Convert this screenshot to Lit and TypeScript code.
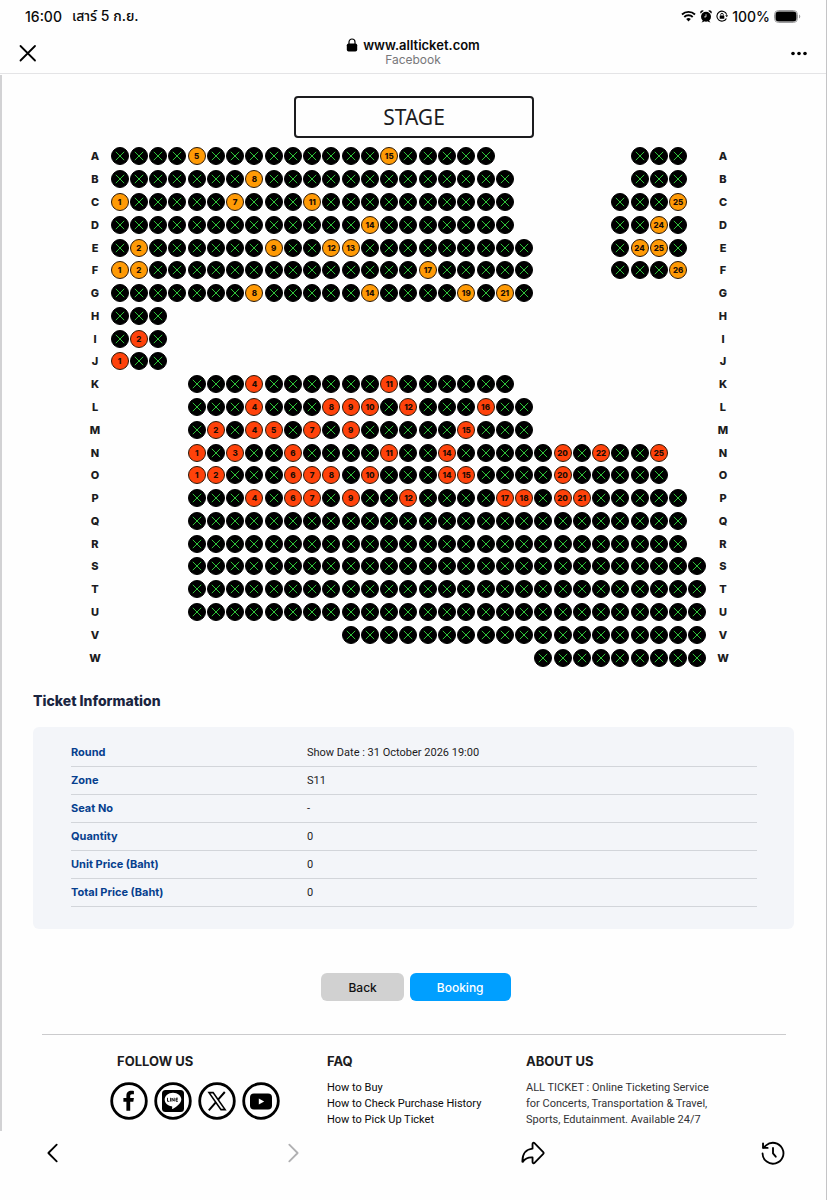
import { LitElement, html, svg, css, nothing } from "lit";
import { customElement, property, state } from "lit/decorators.js";
import { classMap } from "lit/directives/class-map.js";

type Tier = "amber" | "red";

interface SeatRow {
  name: string;
  /** Grid column spans (inclusive) that hold seats. */
  blocks: [number, number][];
  open: number[];
  tier: Tier;
}

const row = (
  name: string,
  blocks: [number, number][],
  open: number[] = [],
  tier: Tier = "red"
): SeatRow => ({ name, blocks, open, tier });

const ROWS: SeatRow[] = [
  row("A", [[1, 20], [28, 30]], [5, 15], "amber"),
  row("B", [[1, 21], [28, 30]], [8], "amber"),
  row("C", [[1, 21], [27, 30]], [1, 7, 11, 25], "amber"),
  row("D", [[1, 21], [27, 30]], [14, 24], "amber"),
  row("E", [[1, 22], [27, 30]], [2, 9, 12, 13, 24, 25], "amber"),
  row("F", [[1, 22], [27, 30]], [1, 2, 17, 26], "amber"),
  row("G", [[1, 22]], [8, 14, 19, 21], "amber"),
  row("H", [[1, 3]]),
  row("I", [[1, 3]], [2]),
  row("J", [[1, 3]], [1]),
  row("K", [[5, 21]], [4, 11]),
  row("L", [[5, 22]], [4, 8, 9, 10, 12, 16]),
  row("M", [[5, 22]], [2, 4, 5, 7, 9, 15]),
  row("N", [[5, 29]], [1, 3, 6, 11, 14, 20, 22, 25]),
  row("O", [[5, 29]], [1, 2, 6, 7, 8, 10, 14, 15, 20]),
  row("P", [[5, 30]], [4, 6, 7, 9, 12, 17, 18, 20, 21]),
  row("Q", [[5, 30]]),
  row("R", [[5, 30]]),
  row("S", [[5, 31]]),
  row("T", [[5, 31]]),
  row("U", [[5, 31]]),
  row("V", [[13, 31]]),
  row("W", [[23, 31]]),
];

const COLUMNS = 31;

@customElement("seat-row")
class SeatRowElement extends LitElement {
  @property({ attribute: false }) row!: SeatRow;
  @state() private picked = new Set<number>();

  static styles = css`
    :host {
      display: grid;
      grid-template-columns: 30px repeat(31, minmax(0, 1fr)) 32px;
      align-items: center;
      justify-items: center;
      min-height: 0;
    }
    .label {
      font-size: 11px;
      line-height: 16px;
      font-weight: 800;
      color: #1c1c1e;
    }
    .seat {
      box-sizing: border-box;
      width: 18px;
      height: 18px;
      padding: 0;
      border: 1px solid #2a1808;
      border-radius: 50%;
      display: grid;
      place-items: center;
      font: 800 8px/10px "Inter", sans-serif;
      color: #1a0d05;
      cursor: pointer;
    }
    .amber { background: #ff9a05; }
    .red { background: #ff420a; }
    .picked { background: #34c759; }
    .taken {
      background: #000;
      border-color: #000;
      cursor: default;
    }
    .cross {
      width: 10px;
      height: 10px;
      stroke: #2fc43a;
      stroke-width: 1;
    }
  `;

  private toggle(n: number) {
    const next = new Set(this.picked);
    next.has(n) ? next.delete(n) : next.add(n);
    this.picked = next;
  }

  private cells() {
    const { blocks, open, tier, name } = this.row;
    const out: unknown[] = [];
    let n = 0;
    for (let c = 1; c <= COLUMNS; c++) {
      if (!blocks.some(([a, b]) => c >= a && c <= b)) {
        out.push(html`<span></span>`);
        continue;
      }
      const no = ++n;
      const free = open.includes(no);
      out.push(
        free
          ? html`<button
              class=${classMap({ seat: true, [tier]: true, picked: this.picked.has(no) })}
              aria-label=${`Seat ${name}${no}`}
              @click=${() => this.toggle(no)}
            >${no}</button>`
          : html`<button class="seat taken" disabled aria-label=${`Seat ${name}${no}, sold`}>
              <svg class="cross" viewBox="0 0 10 10"><path d="M.8.8l8.4 8.4M9.2.8L.8 9.2" /></svg>
            </button>`
      );
    }
    return out;
  }

  render() {
    if (!this.row) return nothing;
    return html`<span class="label">${this.row.name}</span>${this.cells()}<span class="label">${this.row.name}</span>`;
  }
}

const INFO: [string, string][] = [
  ["Round", "Show Date : 31 October 2026 19:00"],
  ["Zone", "S11"],
  ["Seat No", "-"],
  ["Quantity", "0"],
  ["Unit Price (Baht)", "0"],
  ["Total Price (Baht)", "0"],
];

const SOCIAL = [
  {
    name: "Facebook",
    art: svg`<path d="M16.4 28.8V19.8h-3v-3.700h3v-2.200c0-3.600 1.900-5.200 4.900-5.200 1.100 0 2.100.1 2.600.2v3.400h-1.900c-1.400 0-1.800.8-1.800 1.800v2h3.700l-.6 3.700h-3.100v9z"/>`,
  },
  {
    name: "LINE",
    art: svg`<rect x="8" y="8" width="22" height="22" rx="3.500"/>
      <path fill="#fff" d="M19 10.800c-4.700 0-8.300 3-8.300 6.800 0 3.400 2.900 6.100 6.900 6.700.8.1.7.6.5 2.300 0 .4.3.6.7.3 2.300-1.300 8.500-5 8.500-9.300 0-3.800-3.600-6.800-8.300-6.800z"/>
      <path fill="none" stroke="#000" stroke-width=".9" d="M13.500 15.800v3.500h1.900M16.600 15.800v3.700M18 19.500v-3.300l2.200 3v-3.400M23.900 16.200h-1.900v3.100h1.900M22 17.700h1.700"/>`,
  },
  {
    name: "X",
    art: svg`<path fill="none" stroke="#000" stroke-width="1.600" d="M11 10.600h4.100l12 17h-4.100z"/>
      <path fill="none" stroke="#000" stroke-width="2" d="M26.800 10l-6.700 7.700M17.800 20.300l-7 8.100"/>`,
  },
  {
    name: "YouTube",
    art: svg`<rect x="8" y="11.500" width="22" height="16" rx="4"/><path fill="#fff" d="M16.800 16.500l5.400 3-5.400 3z"/>`,
  },
];

@customElement("app-root")
class AppRoot extends LitElement {
  static styles = css`
    :host {
      display: flex;
      flex-direction: column;
      height: 100vh;
      box-sizing: border-box;
      border-right: 1px solid #c4c4c6;
      background: #fefefe;
      color: #1c1c1e;
      font-family: "Inter", "Noto Sans", "Noto Sans Thai", sans-serif;
      overflow: hidden;
    }
    svg { display: block; }
    button { font-family: inherit; cursor: pointer; }
    .status {
      display: flex;
      justify-content: space-between;
      align-items: center;
      height: 32px;
      padding: 0 25px;
      font-size: 14px;
      font-weight: 500;
      color: #0a0a0a;
      flex: none;
    }
    .group { display: flex; align-items: center; gap: 10px; }
    .signals { gap: 4px; }
    .nav {
      display: grid;
      grid-template-columns: 1fr auto 1fr;
      align-items: center;
      height: 41px;
      padding: 0 18px;
      border-bottom: 1px solid #e4e4e6;
      flex: none;
    }
    .icon {
      display: block;
      padding: 0;
      border: 0;
      background: none;
      color: #000;
    }
    .icon.end { justify-self: end; }
    .icon:disabled { color: #b0b0b2; cursor: default; }
    .address { text-align: center; padding-bottom: 2px; }
    .url {
      display: flex;
      align-items: center;
      gap: 5px;
      font-size: 13px;
      line-height: 16px;
      font-weight: 600;
      color: #0a0a0a;
    }
    .via { font-size: 12px; line-height: 14px; color: #77777a; }
    .page {
      flex: 1;
      min-height: 0;
      overflow: hidden;
      border-left: 2px solid #d2d2d4;
      margin-top: 1px;
    }
    .stage {
      box-sizing: border-box;
      width: 240px;
      max-width: 100%;
      margin: 21px auto 7px;
      border: 2px solid #1c1c1e;
      border-radius: 4px;
      text-align: center;
      font-family: "Noto Sans", sans-serif;
      font-size: 21px;
      line-height: 38px;
    }
    .map {
      display: grid;
      grid-template-rows: repeat(23, minmax(0, 1fr));
      aspect-ratio: 659 / 524;
      margin: 0 87px 0 78px;
    }
    .heading {
      margin: 23px 31px 17px;
      font-size: 14px;
      line-height: 18px;
      font-weight: 800;
      color: #1a2540;
    }
    .panel {
      margin: 0 32px 0 31px;
      padding: 12px 37px 22px 38px;
      border-radius: 6px;
      background: #f3f5f9;
    }
    .info {
      width: 100%;
      border-collapse: collapse;
      table-layout: fixed;
      font-size: 11px;
      line-height: 27px;
    }
    .info th, .info td {
      padding: 0;
      text-align: left;
      border-bottom: 1px solid #d2d5da;
    }
    .info th { width: 236px; font-weight: 700; color: #063f8e; }
    .info td { font-family: "Roboto", sans-serif; }
    .actions {
      display: flex;
      justify-content: center;
      gap: 6px;
      margin: 44px 0 33px;
      padding-left: 4px;
    }
    .btn {
      height: 28px;
      padding: 0 27px;
      border: 0;
      border-radius: 6px;
      font-size: 12px;
      font-weight: 500;
    }
    .back { background: #d1d1d1; color: #111; }
    .book { background: #009fff; color: #fff; }
    .footer {
      display: grid;
      grid-template-columns: 217fr 199fr 260fr;
      margin: 0 40px;
      padding: 17px 0 0 68px;
      border-top: 1px solid #cbcbcd;
    }
    .title {
      margin: 0 0 10px;
      font-size: 13px;
      line-height: 18px;
      font-weight: 700;
    }
    .follow { padding-left: 7px; margin-bottom: 12px; }
    .social { display: flex; gap: 6px; }
    .link, .about {
      display: block;
      margin: 0;
      font-family: "Roboto", sans-serif;
      font-size: 11px;
      line-height: 16px;
      color: #0a0a0a;
      text-decoration: none;
    }
    .about { color: #333336; max-width: 190px; }
    .tabs {
      display: flex;
      justify-content: space-between;
      align-items: flex-start;
      height: 59px;
      padding: 10px 41px 0;
      flex: none;
    }
  `;

  render() {
    return html`
      <div class="status">
        <div class="group"><span>16:00</span><span lang="th">เสาร์ 5 ก.ย.</span></div>
        <div class="group signals">
          <svg width="15" height="12" viewBox="0 0 15 12" fill="none" stroke="#000" stroke-width="1.900">
            <path d="M1 4.500a9.400 9.400 0 0 1 13 0M3.300 7a6 6 0 0 1 8.400 0" />
            <path d="M7.500 11.500L5.200 9.100a3.300 3.300 0 0 1 4.600 0z" fill="#000" stroke="none" />
          </svg>
          <svg width="12" height="13" viewBox="0 0 12 13">
            <circle cx="6" cy="6.800" r="5" />
            <path d="M.6 3.600A2.200 2.200 0 0 1 3.800.7zM11.400 3.600A2.200 2.200 0 0 0 8.200.7zM1.500 12.600l1.600-2.200 1.300 1zM10.500 12.600l-1.600-2.200-1.300 1z" />
            <path d="M6 4.300v2.600H4.200" fill="none" stroke="#fff" stroke-width=".8" />
          </svg>
          <svg width="12" height="12" viewBox="0 0 12 12" fill="none" stroke="#000" stroke-width="1.100">
            <path d="M10.400 8.400A5 5 0 1 1 10.700 4.600" />
            <path d="M9.200 5.300h2.800l-1.200 2z" fill="#000" stroke="none" />
            <rect x="3.700" y="5.400" width="4.600" height="3.300" rx=".5" fill="#000" stroke="none" />
            <path d="M4.700 5.500V4.600a1.300 1.300 0 0 1 2.600 0v.9" stroke-width=".9" />
          </svg>
          <span>100%</span>
          <svg width="27" height="13" viewBox="0 0 27 13">
            <rect x=".5" y=".5" width="23" height="12" rx="4" fill="none" stroke="#9c9c9e" />
            <rect x="1.500" y="1.500" width="21" height="10" rx="3.200" />
            <path d="M25 4.500a2.200 2.200 0 0 1 0 4z" fill="#9c9c9e" />
          </svg>
        </div>
      </div>

      <header class="nav">
        <button class="icon" aria-label="Close">
          <svg width="20" height="20" viewBox="0 0 20 20" fill="none" stroke="currentColor" stroke-width="1.800" stroke-linecap="round">
            <path d="M2.500 3l14.500 14.500M17 3L2.500 17.500" />
          </svg>
        </button>
        <div class="address">
          <div class="url">
            <svg width="12" height="14" viewBox="0 0 12 14">
              <rect x=".8" y="5.500" width="10.400" height="8" rx="1.800" />
              <path d="M3 6V4a3 3 0 0 1 6 0v2" fill="none" stroke="#000" stroke-width="1.200" />
            </svg>
            <span>www.allticket.com</span>
          </div>
          <div class="via">Facebook</div>
        </div>
        <button class="icon end" aria-label="More">
          <svg width="20" height="20" viewBox="0 0 20 20">
            <circle cx="5" cy="10.500" r="1.800" /><circle cx="11" cy="10.500" r="1.800" /><circle cx="17" cy="10.500" r="1.800" />
          </svg>
        </button>
      </header>

      <main class="page">
        <div class="stage">STAGE</div>
        <div class="map">${ROWS.map((r) => html`<seat-row .row=${r}></seat-row>`)}</div>

        <h2 class="heading">Ticket Information</h2>
        <section class="panel">
          <table class="info">
            <tbody>
              ${INFO.map(([k, v]) => html`<tr><th scope="row">${k}</th><td>${v}</td></tr>`)}
            </tbody>
          </table>
        </section>

        <div class="actions">
          <button class="btn back">Back</button>
          <button class="btn book">Booking</button>
        </div>

        <footer class="footer">
          <section>
            <h3 class="title follow">FOLLOW US</h3>
            <div class="social">
              ${SOCIAL.map(
                (s) => html`<a href="#" aria-label=${s.name}>
                  <svg width="38" height="38" viewBox="0 0 38 38">
                    <circle cx="19" cy="19" r="17.300" fill="none" stroke="#000" stroke-width="2.800" />
                    ${s.art}
                  </svg>
                </a>`
              )}
            </div>
          </section>
          <section>
            <h3 class="title">FAQ</h3>
            <a class="link" href="#">How to Buy</a>
            <a class="link" href="#">How to Check Purchase History</a>
            <a class="link" href="#">How to Pick Up Ticket</a>
          </section>
          <section>
            <h3 class="title">ABOUT US</h3>
            <p class="about">
              ALL TICKET : Online Ticketing Service for Concerts, Transportation &amp; Travel, Sports, Edutainment. Available 24/7
            </p>
          </section>
        </footer>
      </main>

      <nav class="tabs">
        <button class="icon" aria-label="Back">
          <svg width="24" height="24" viewBox="0 0 26 26" fill="none" stroke="currentColor" stroke-width="2" stroke-linecap="round" stroke-linejoin="round">
            <path d="M17 4l-9 9 9 9" />
          </svg>
        </button>
        <button class="icon" aria-label="Forward" disabled>
          <svg width="24" height="24" viewBox="0 0 26 26" fill="none" stroke="currentColor" stroke-width="2" stroke-linecap="round" stroke-linejoin="round">
            <path d="M9 4l9 9-9 9" />
          </svg>
        </button>
        <button class="icon" aria-label="Share">
          <svg width="24" height="24" viewBox="0 0 26 26" fill="none" stroke="currentColor" stroke-width="2" stroke-linejoin="round" stroke-linecap="round">
            <path d="M12.500 3.200c0-1.300 1.200-1.800 2.100-.9l9.500 9.700c.6.600.6 1.400 0 2l-9.500 9.700c-.9.900-2.100.4-2.100-.9V17.800c-4.500-.3-7.800.8-10.300 4.500-.4.500-.8.200-.7-.3C1.500 13.500 6 8.700 12.500 8.200z" />
          </svg>
        </button>
        <button class="icon" aria-label="History">
          <svg width="24" height="24" viewBox="0 0 26 26" fill="none" stroke="currentColor" stroke-width="2" stroke-linecap="round" stroke-linejoin="round">
            <path d="M1.700 13.500A11.300 11.300 0 1 0 5.500 4.800L2.800 7.200" />
            <path d="M2.200 2.500v5h5" />
            <path d="M13 7.500v6l3 3.500" />
          </svg>
        </button>
      </nav>
    `;
  }
}
